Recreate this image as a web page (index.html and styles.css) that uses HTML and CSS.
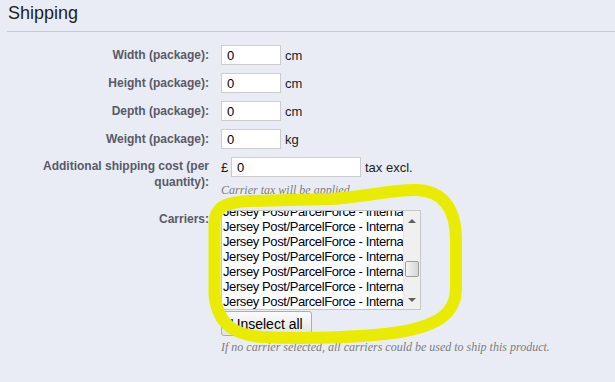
FILE: index.html
```html
<!DOCTYPE html>
<html lang="en">
<head>
    <meta charset="UTF-8">
    <title>Shipping</title>
    <link rel="stylesheet" href="styles.css">
</head>
<body>

<div class="panel">
    <h3 class="panel-title">Shipping</h3>

    <div class="form-row">
        <label class="form-label">Width (package):</label>
        <div class="form-field inline">
            <input class="small-input" type="text" value="0">
            <span class="unit">cm</span>
        </div>
    </div>

    <div class="form-row">
        <label class="form-label">Height (package):</label>
        <div class="form-field inline">
            <input class="small-input" type="text" value="0">
            <span class="unit">cm</span>
        </div>
    </div>

    <div class="form-row">
        <label class="form-label">Depth (package):</label>
        <div class="form-field inline">
            <input class="small-input" type="text" value="0">
            <span class="unit">cm</span>
        </div>
    </div>

    <div class="form-row">
        <label class="form-label">Weight (package):</label>
        <div class="form-field inline">
            <input class="small-input" type="text" value="0">
            <span class="unit">kg</span>
        </div>
    </div>

    <div class="form-row top">
        <label class="form-label two-lines">Additional shipping cost (per quantity):</label>
        <div class="form-field">
            <div class="inline">
                <span class="currency">£</span>
                <input class="cost-input" type="text" value="0">
                <span class="unit">tax excl.</span>
            </div>
            <p class="hint">Carrier tax will be applied.</p>
        </div>
    </div>

    <div class="form-row top carriers-row">
        <label class="form-label carriers-label">Carriers:</label>
        <div class="form-field">
            <div class="listbox">
                <ul class="carrier-list">
                    <li>Jersey Post/ParcelForce - International</li>
                    <li>Jersey Post/ParcelForce - International</li>
                    <li>Jersey Post/ParcelForce - International</li>
                    <li>Jersey Post/ParcelForce - International</li>
                    <li>Jersey Post/ParcelForce - International</li>
                    <li>Jersey Post/ParcelForce - International</li>
                    <li>Jersey Post/ParcelForce - International</li>
                </ul>
                <!-- barra de desplazamiento dibujada -->
                <div class="scrollbar">
                    <span class="arrow up"></span>
                    <span class="thumb"></span>
                    <span class="arrow down"></span>
                </div>
            </div>
            <button class="unselect-button" type="button">Unselect all</button>
            <p class="hint note">If no carrier selected, all carriers could be used to ship this product.</p>
        </div>
    </div>
</div>

<!-- trazo amarillo a mano sobre la captura -->
<svg class="marker" width="615" height="382" viewBox="0 0 615 382">
    <path d="M214.5 295 L214.5 225 C214 209 222 202 250 201 L330 199 C365 197 390 190 415 190 C440 190 456 205 456 240 L456 288 C456 315 435 326 400 332 C360 338 300 339 262 337 C236 335 218 326 214.5 295 Z"
          fill="none" stroke="#e9ec00" stroke-width="12" stroke-linejoin="round"/>
</svg>

</body>
</html>
```

FILE: styles.css
```css
/* Estilos básicos */
body {
    font-family: "Liberation Sans", Arial, sans-serif;
    margin: 0;
    padding: 0;
    background-color: #e9ecf4;
    width: 615px;
    height: 382px;
    overflow: hidden;
}

.panel {
    margin-left: 7px;
}

.panel-title {
    margin: 0 0 13px 0;
    padding: 3px 0 0 1px;
    height: 28px;
    font-size: 18px;
    font-weight: normal;
    color: #1e1e1e;
    border-bottom: 1px solid #c9cacf;
}

.form-row {
    display: flex;
    align-items: center;
    margin-bottom: 8px;
}

.form-row.top {
    align-items: flex-start;
}

.form-label {
    width: 202px;
    margin-right: 12px;
    text-align: right;
    font-size: 12px;
    font-weight: bold;
    color: #585a69;
}

.form-label.two-lines {
    line-height: 16px;
    padding-top: 1px;
}

.carriers-row {
    margin-top: 12px;
}

.carriers-label {
    padding-top: 2px;
}

.form-field.inline,
.form-field .inline {
    display: flex;
    align-items: center;
}

.small-input,
.cost-input {
    box-sizing: border-box;
    height: 20px;
    margin: 0;
    padding: 0 5px;
    border: 1px solid #cccccc;
    background: #ffffff;
    font-family: "Liberation Sans", Arial, sans-serif;
    font-size: 13px;
    color: #000;
}

.small-input {
    width: 60px;
}

.cost-input {
    width: 130px;
}

.unit {
    margin-left: 4px;
    font-size: 13px;
    color: #1c1c1c;
}

.currency {
    width: 10px;
    font-size: 13px;
    color: #1c1c1c;
}

.hint {
    margin: 6px 0 0 0;
    font-family: "Liberation Serif", Georgia, serif;
    font-style: italic;
    font-size: 12px;
    color: #7d7d7d;
}

.listbox {
    position: relative;
    box-sizing: border-box;
    width: 200px;
    height: 100px;
    border: 1px solid #c6c6c6;
    background: #ffffff;
    overflow: hidden;
}

.carrier-list {
    list-style: none;
    margin: 0;
    padding: 0 17px 0 1px;
    height: 98px;
    display: flex;
    flex-direction: column;
    justify-content: flex-end;
    overflow: hidden;
}

.carrier-list li {
    flex-shrink: 0;
    height: 15px;
    line-height: 15px;
    font-size: 13px;
    letter-spacing: -0.4px;
    color: #000014;
    white-space: nowrap;
    overflow: hidden;
}

.scrollbar {
    position: absolute;
    top: 0;
    right: 0;
    width: 16px;
    height: 98px;
    background: #f0f0f0;
    border-left: 1px solid #e6e6e6;
}

.arrow {
    position: absolute;
    left: 4px;
    width: 0;
    height: 0;
    border-left: 4px solid transparent;
    border-right: 4px solid transparent;
}

.arrow.up {
    top: 8px;
    border-bottom: 4px solid #606060;
}

.arrow.down {
    bottom: 7px;
    border-top: 4px solid #606060;
}

.thumb {
    position: absolute;
    left: 1px;
    top: 50px;
    width: 12px;
    height: 14px;
    border: 1px solid #9c9c9c;
    border-radius: 2px;
    background: linear-gradient(to right, #f4f4f4, #d6d6d6);
}

.unselect-button {
    display: block;
    margin-top: 1px;
    width: 91px;
    height: 25px;
    padding: 0;
    border: 1px solid #adadad;
    border-radius: 3px;
    background: linear-gradient(#fbfbfb, #e3e3e3);
    font-family: "Liberation Sans", Arial, sans-serif;
    font-size: 14px;
    color: #000;
}

.hint.note {
    margin-top: 4px;
}

.marker {
    position: absolute;
    top: 0;
    left: 0;
    pointer-events: none;
}
```
